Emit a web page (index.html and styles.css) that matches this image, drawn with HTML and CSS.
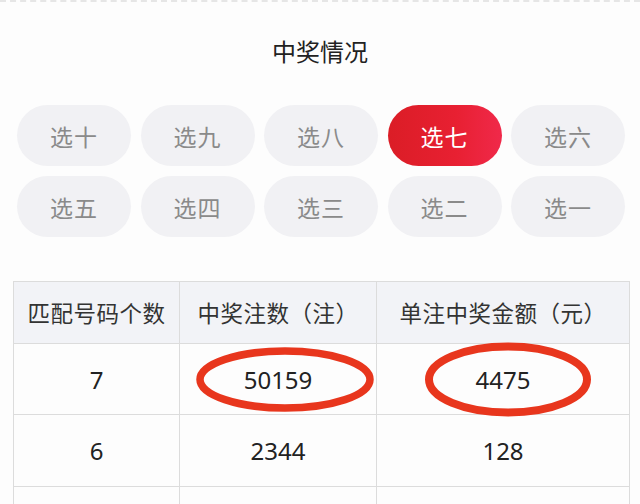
FILE: index.html
```html
<!DOCTYPE html>
<html lang="zh">
<head>
<meta charset="utf-8">
<link rel="stylesheet" href="styles.css">
</head>
<body>
<div class="page">
  <h1 class="title">中奖情况</h1>
  <div class="tabs">
    <div class="tab">选十</div>
    <div class="tab">选九</div>
    <div class="tab">选八</div>
    <div class="tab active">选七</div>
    <div class="tab">选六</div>
    <div class="tab">选五</div>
    <div class="tab">选四</div>
    <div class="tab">选三</div>
    <div class="tab">选二</div>
    <div class="tab">选一</div>
  </div>
  <table class="prize">
    <colgroup><col class="c1"><col class="c2"><col class="c3"></colgroup>
    <thead>
      <tr><th>匹配号码个数</th><th>中奖注数（注）</th><th>单注中奖金额（元）</th></tr>
    </thead>
    <tbody>
      <tr class="r1">
        <td>7</td>
        <td class="mark">50159
          <svg class="ring ring-a" width="182" height="67" viewBox="0 0 182 67"><ellipse cx="91" cy="33.5" rx="85" ry="28.5" fill="none" stroke="#e8361d" stroke-width="7.5"/></svg>
        </td>
        <td class="mark">4475
          <svg class="ring ring-b" width="170" height="77" viewBox="0 0 170 77"><ellipse cx="85" cy="38.5" rx="79" ry="33" fill="none" stroke="#e8361d" stroke-width="8"/></svg>
        </td>
      </tr>
      <tr class="r2"><td>6</td><td>2344</td><td>128</td></tr>
      <tr class="r3"><td></td><td></td><td></td></tr>
    </tbody>
  </table>
</div>
</body>
</html>
```
FILE: styles.css
```css
html, body {
  margin: 0;
  padding: 0;
  background: #fdfdfd;
  font-family: "Noto Sans", "Noto Sans CJK SC", sans-serif;
}
.page {
  width: 640px;
  height: 504px;
  overflow: hidden;
  border-top: 2px dashed #e6e6e6;
  box-sizing: border-box;
}
.title {
  margin: 0;
  padding-top: 34px;
  font-size: 24px;
  line-height: 32px;
  font-weight: 400;
  color: #222;
  text-align: center;
}
.tabs {
  margin-top: 37px;
  padding-left: 17px;
  display: grid;
  grid-template-columns: repeat(5, 114px);
  grid-auto-rows: 61px;
  column-gap: 9.5px;
  row-gap: 10px;
}
.tab {
  border-radius: 31px;
  background: #f1f1f4;
  color: #8a8a8a;
  font-size: 23px;
  display: flex;
  align-items: center;
  justify-content: center;
  letter-spacing: 1px;
}
.tab.active {
  background: linear-gradient(90deg, #db1d26 0%, #e82032 60%, #f0294a 100%);
  color: #fff;
}
.prize {
  margin-top: 44px;
  margin-left: 13px;
  width: 616px;
  border-collapse: collapse;
  table-layout: fixed;
}
.c1 { width: 166px; }
.c2 { width: 197px; }
.c3 { width: 253px; }
.prize th, .prize td {
  border: 1px solid #dcdcdc;
  text-align: center;
  padding: 0;
}
.prize th {
  background: #f2f3f7;
  height: 61px;
  font-size: 22.5px;
  font-weight: 400;
  color: #333;
  letter-spacing: 0.5px;
}
.prize td {
  font-size: 24px;
  color: #222;
  background: #fdfdfd;
}
.r1 td { height: 70px; }
.r2 td { height: 71px; }
.r3 td { height: 40px; }
.mark {
  position: relative;
}
.ring {
  position: absolute;
  top: 50%;
  left: 50%;
  pointer-events: none;
}
.ring-a {
  margin-left: -84px;
  margin-top: -33px;
}
.ring-b {
  margin-left: -80px;
  margin-top: -38px;
}
```
